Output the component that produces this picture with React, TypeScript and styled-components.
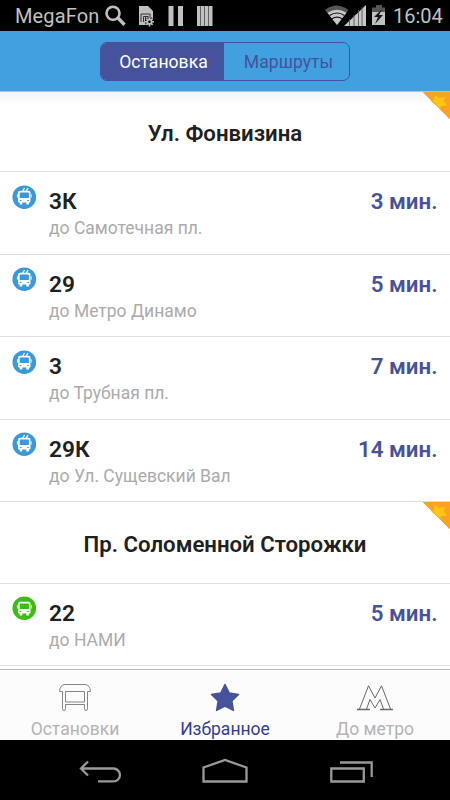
import React from 'react';
import styled, { createGlobalStyle } from 'styled-components';

const GlobalStyle = createGlobalStyle`
  * { box-sizing: border-box; }
  body { margin: 0; background: #fff; font-family: Roboto, sans-serif; }
  svg { display: block; flex: none; }
`;

const Screen = styled.div`
  width: 450px;
  height: 800px;
  display: flex;
  flex-direction: column;
  overflow: hidden;
  background: #fff;
`;

const StatusBar = styled.header`
  height: 31px;
  flex: none;
  display: flex;
  align-items: center;
  justify-content: space-between;
  padding: 0 7px 0 15px;
  background: #000;
  color: #c0c0c0;
`;

const StatusGroup = styled.div`
  display: flex;
  align-items: center;
`;

const Carrier = styled.span`
  width: 89px;
  font-size: 20px;
  letter-spacing: 0.15px;
  line-height: 31px;
  padding-top: 1px;
  white-space: nowrap;
`;

const Clock = styled.span`
  width: 51px;
  padding: 1px 0 0 1px;
  font-size: 20px;
  line-height: 31px;
  white-space: nowrap;
`;

const TopBar = styled.div`
  height: 61px;
  flex: none;
  display: flex;
  justify-content: center;
  padding-top: 11px;
  background: #41a0e0;
  border-bottom: 1px solid #a9c5d8;
`;

const Segments = styled.div`
  width: 250px;
  height: 39px;
  display: flex;
  border: 1px solid #46529b;
  border-radius: 7px;
  overflow: hidden;
`;

const Segment = styled.button<{ $active?: boolean }>`
  width: ${p => (p.$active ? '123px' : '125px')};
  border: 0;
  padding: 1px 0 0 ${p => (p.$active ? '2px' : '4px')};
  font: 400 17.6px/37px Roboto, sans-serif;
  color: ${p => (p.$active ? '#fff' : '#46529b')};
  background: ${p => (p.$active ? '#46529b' : 'transparent')};
`;

const Content = styled.main`
  flex: 1;
  min-height: 0;
  overflow: hidden;
  background: linear-gradient(#f3f3f3, #fff 12px);
`;

const StopHeader = styled.h2<{ $height: number }>`
  position: relative;
  height: ${p => p.$height}px;
  margin: 0;
  border-bottom: 1px solid #dedede;
  text-align: center;
  font-size: 22.2px;
  font-weight: 600;
  line-height: ${p => p.$height + 2.5}px;
  color: #202020;
`;

const Corner = styled.svg`
  position: absolute;
  top: 0;
  right: 0;
`;

const RouteRow = styled.div`
  height: 82.5px;
  display: flex;
  align-items: flex-start;
  padding: 12.5px 12.5px 0 12px;
  border-bottom: 1px solid #dedede;
`;

const RouteText = styled.div`
  flex: 1;
  padding: 3.5px 0 0 12px;
`;

const RouteName = styled.div`
  font-size: 22.7px;
  font-weight: 600;
  line-height: 28px;
  color: #202020;
`;

const Destination = styled.div`
  font-size: 17.5px;
  line-height: 25px;
  color: #ababab;
`;

const Eta = styled.div`
  padding-top: 2.5px;
  font-size: 22.3px;
  font-weight: 600;
  line-height: 28px;
  color: #46529b;
`;

const Tabs = styled.nav`
  height: 71px;
  flex: none;
  display: grid;
  grid-template-columns: repeat(3, 1fr);
  border-top: 1px solid #bdbdbd;
  background: #fcfcfc;
`;

const Tab = styled.div<{ $active?: boolean }>`
  display: flex;
  flex-direction: column;
  align-items: center;
  padding-top: 10px;
  color: ${p => (p.$active ? '#303c9b' : '#b3b3b3')};
`;

const TabLabel = styled.span`
  margin-top: 2px;
  font-size: 17.5px;
  line-height: 30px;
`;

const NavBar = styled.footer`
  height: 60px;
  flex: none;
  display: grid;
  grid-template-columns: 150px 150px 150px;
  justify-content: center;
  background: #000;
`;

const StatusIcons = () => (
  <svg width="112" height="31" viewBox="104 0 112 31">
    <circle cx="113" cy="13.2" r="6.5" fill="none" stroke="#c0c0c0" strokeWidth="2.6" />
    <path d="M117.500 17.500 124.500 24.800" stroke="#c0c0c0" strokeWidth="3.4" />
    <path d="M139 6h9l5 5v9h-4v5h-10z" fill="#c0c0c0" />
    <path d="M141 22v-8h9v3M143.500 22v-5.500h5M145.500 17v5" fill="none" stroke="#333" />
    <circle cx="149.500" cy="21.800" r="4.800" fill="#000" opacity=".65" />
    <path d="M149.500 17.200v9.200M145 21.800h9M146.400 18.700l6.200 6.200M152.600 18.700l-6.200 6.200" stroke="#c0c0c0" strokeWidth="1.600" />
    <circle cx="149.500" cy="21.800" r="2.800" fill="#c0c0c0" />
    <circle cx="149.500" cy="21.800" r="1.300" fill="#000" />
    <path d="M168.500 6h5v20h-5zM178 6h5v20h-5z" fill="#c0c0c0" />
    <path d="M197 6h15.500v20H197z" fill="#c0c0c0" />
    <path d="M200.500 6v20M204.500 6v20M208.500 6v20" stroke="#606060" />
  </svg>
);

const SignalIcons = () => (
  <svg width="68" height="31" viewBox="324 0 68 31">
    <path d="M325 10Q336.500 1 348.500 10L337 25z" fill="#555" />
    <path d="M327.500 12.800Q337 6.500 346.500 12.800L337 25z" fill="#c8c8c8" />
    <path d="M329.500 15.500Q337 10.500 344.500 15.500M332 18.700Q337 15.500 342 18.700" fill="none" stroke="#111" strokeWidth="1.200" />
    <path d="M344 26 366 5v21z" fill="#c8c8c8" />
    <path d="M349.500 19v7M354 15v11M358.500 10v16M362 7v19" stroke="#555" strokeWidth=".9" />
    <path d="M372 13V7.500h4V5h6v2.500h3V13z" fill="#555" />
    <path d="M372 12h13v13h-13z" fill="#c0c0c0" />
    <path d="M382 9l-8 8h4l-3 7 8-9h-4z" fill="#161616" />
  </svg>
);

const VehicleIcon = ({ kind }: { kind: Kind }) => (
  <svg width="25" height="25" viewBox="0 0 25 25">
    <circle cx="12.300" cy="12.200" r="11.800" fill={kind === 'trolley' ? '#3999d9' : '#3bbd11'} />
    {kind === 'trolley' && (
      <path d="M10.500 6.500 12.500 3M14 6.500 16 3" stroke="#fff" strokeWidth="1.300" />
    )}
    <path
      fillRule="evenodd"
      fill="#fff"
      d="M8 5.800h8.800q1.700 0 1.700 1.700v9.300q0 .8-.8.8h-.8v1.800h-2.600v-1.800h-4v1.800H7.700v-1.800h-.8q-.8 0-.8-.8V7.500q0-1.700 1.900-1.700zM8.500 7.400q-.8 0-.8.8v4.800h9.200V8.200q0-.8-.8-.8zM7.800 15v.9h1.600v-.9zM15.200 15v.9h1.600v-.9z"
    />
    <path d="M5.400 9.200v3.400M19.200 9.200v3.400" stroke="#fff" strokeWidth=".9" />
  </svg>
);

const FavoriteCorner = () => (
  <Corner width="28" height="28" viewBox="0 0 28 28">
    <path d="M1 0h27v27z" fill="#fba321" />
    <path d="M12.500 3L17 6 23.500 5 21.500 9.200 25 13.500 19.500 14 17.500 16.200 9 9.500 12.300 8z" fill="#ffc610" />
    <path d="M1 0l27 27" stroke="#f09a2c" strokeWidth=".7" />
  </Corner>
);

const BenchIcon = () => (
  <svg width="34" height="32" viewBox="58 680 34 32" fill="none" stroke="#858585" strokeWidth="1">
    <path d="M65 684.500h20q5 .5 5.500 7H87.500v17q0 2-1.500 2t-1.500-2v-4h-19v4q0 2-1.500 2t-1.500-2v-17h-3q.5-6.500 5.500-7z" />
    <path d="M65.500 691.500h19v10.500h-19z" />
  </svg>
);

const StarIcon = () => (
  <svg width="34" height="32" viewBox="208 680 34 32">
    <path d="M225 684.500l4.300 8.600 9.200 1.300-6.700 6.500 1.600 9.500-8.400-4.400-8.400 4.400 1.600-9.500-6.700-6.500 9.200-1.300z" fill="#46529b" stroke="#46529b" strokeWidth="1.500" strokeLinejoin="round" />
  </svg>
);

const MetroIcon = () => (
  <svg width="38" height="32" viewBox="356 680 38 32" fill="none" stroke="#686868" strokeWidth="1">
    <path d="M359.500 709 368.500 685.800 375 698 381.500 685.800 390.500 709M366.500 709 370 699.500 375 708 380 699.500 383.500 709" />
    <path d="M357 709.500h13M380 709.500h13" strokeWidth="1.300" />
  </svg>
);

const BackIcon = () => (
  <svg width="150" height="60" viewBox="0 740 150 60" fill="none" stroke="#999" strokeWidth="2.300">
    <path d="M81 768.500h32.500a6.400 6.400 0 0 1 0 12.900H98M88 761.500l-7 7 7 7" />
  </svg>
);

const HomeIcon = () => (
  <svg width="150" height="60" viewBox="150 740 150 60" fill="none" stroke="#999" strokeWidth="2.300">
    <path d="M203.500 781.500v-14L225 760l21.500 7.500v14z" />
  </svg>
);

const RecentIcon = () => (
  <svg width="150" height="60" viewBox="300 740 150 60" fill="none" stroke="#999" strokeWidth="2.300">
    <path d="M331.300 768.500h32.500v13h-32.500zM340 762.500h31.700V777" />
  </svg>
);

type Kind = 'trolley' | 'bus';
type Route = { name: string; to: string; eta: string; kind: Kind };

const stops: { title: string; height: number; routes: Route[] }[] = [
  {
    title: 'Ул. Фонвизина',
    height: 80,
    routes: [
      { name: '3К', to: 'до Самотечная пл.', eta: '3 мин.', kind: 'trolley' },
      { name: '29', to: 'до Метро Динамо', eta: '5 мин.', kind: 'trolley' },
      { name: '3', to: 'до Трубная пл.', eta: '7 мин.', kind: 'trolley' },
      { name: '29К', to: 'до Ул. Сущевский Вал', eta: '14 мин.', kind: 'trolley' },
    ],
  },
  {
    title: 'Пр. Соломенной Сторожки',
    height: 81.5,
    routes: [{ name: '22', to: 'до НАМИ', eta: '5 мин.', kind: 'bus' }],
  },
];

export default function App() {
  return (
    <Screen>
      <GlobalStyle />
      <StatusBar>
        <StatusGroup>
          <Carrier>MegaFon</Carrier>
          <StatusIcons />
        </StatusGroup>
        <StatusGroup>
          <SignalIcons />
          <Clock>16:04</Clock>
        </StatusGroup>
      </StatusBar>
      <TopBar>
        <Segments>
          <Segment $active>Остановка</Segment>
          <Segment>Маршруты</Segment>
        </Segments>
      </TopBar>
      <Content>
        {stops.map(stop => (
          <section key={stop.title}>
            <StopHeader $height={stop.height}>
              {stop.title}
              <FavoriteCorner />
            </StopHeader>
            {stop.routes.map(route => (
              <RouteRow key={route.name}>
                <VehicleIcon kind={route.kind} />
                <RouteText>
                  <RouteName>{route.name}</RouteName>
                  <Destination>{route.to}</Destination>
                </RouteText>
                <Eta>{route.eta}</Eta>
              </RouteRow>
            ))}
          </section>
        ))}
      </Content>
      <Tabs>
        <Tab><BenchIcon /><TabLabel>Остановки</TabLabel></Tab>
        <Tab $active><StarIcon /><TabLabel>Избранное</TabLabel></Tab>
        <Tab><MetroIcon /><TabLabel>До метро</TabLabel></Tab>
      </Tabs>
      <NavBar>
        <BackIcon />
        <HomeIcon />
        <RecentIcon />
      </NavBar>
    </Screen>
  );
}
